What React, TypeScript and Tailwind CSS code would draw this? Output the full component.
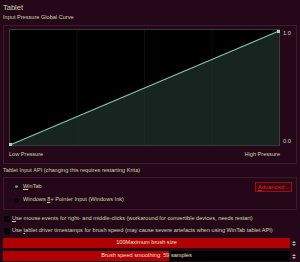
import React from 'react';

const FONT = { fontFamily: '"Liberation Sans", Arial, sans-serif' };

export default function App() {
    return (
        <div className="w-[300px] h-[262px] overflow-hidden bg-[#24081a] text-[#cfd3a6] text-[5.6px] leading-none" style={FONT}>
            {/* Title */}
            <p className="pl-[3px] pt-[4px] h-[14px] text-[7.5px]">Tablet</p>
            <p className="pl-[3px] h-[11px] pt-[1px]">Input Pressure Global Curve</p>

            {/* Curve group */}
            <div className="mx-[3px] h-[139px] border border-[#3d1a2c] pl-[5px] pt-[3px]">
                <div className="flex">
                    <CurveGraph />
                    <div className="flex flex-col justify-between pl-[3px] pt-[2px] pb-[1px]">
                        <span>1.0</span>
                        <span>0.0</span>
                    </div>
                </div>
                <div className="flex justify-between w-[271px] pt-[6px]">
                    <span>Low Pressure</span>
                    <span>High Pressure</span>
                </div>
            </div>

            <p className="pl-[3px] pt-[4px] h-[13px]">Tablet Input API (changing this requires restarting Krita)</p>

            {/* API group */}
            <div className="mx-[3px] h-[33px] border border-[#3d1a2c] pl-[10px] pr-[4px] pt-[3px]">
                <div className="flex items-center justify-between h-[11px]">
                    <Radio checked label={<><u>W</u>inTab</>} />
                    <button className="w-[37px] h-[10px] border border-[#a30a14] bg-[#3a0810] text-[#d8203c] text-[6px] leading-none">
                        <u>A</u>dvanced...
                    </button>
                </div>
                <div className="flex items-center h-[10px] mt-[3px]">
                    <Radio label={<>Windows <u>8</u>+ Pointer Input (Windows Ink)</>} />
                </div>
            </div>

            {/* Checkboxes */}
            <div className="pl-[4px] pt-[3px]">
                <Check label={<><u>U</u>se mouse events for right- and middle-clicks (workaround for convertible devices, needs restart)</>} />
                <Check label={<>Use <u>t</u>ablet driver timestamps for brush speed (may cause severe artefacts when using WinTab tablet API)</>} />
            </div>

            {/* Sliders */}
            <div className="flex flex-col gap-[3px] pl-[3px] pt-[1px]">
                <SpinBar value={100} text="100Maximum brush size" />
                <SpinBar value={58} text={<>Brush speed smoothing: <span className="bg-[#b00000]">59</span> samples</>} />
            </div>
        </div>
    );
}

function CurveGraph() {
    return (
        <svg width="271" height="117" className="block shrink-0">
            <rect x="0.5" y="0.5" width="270" height="116" fill="#000000" stroke="#3a3a36" />
            <line x1="68" y1="1" x2="68" y2="116" stroke="#1f0712" />
            <line x1="135.5" y1="1" x2="135.5" y2="116" stroke="#1f0712" />
            <line x1="203" y1="1" x2="203" y2="116" stroke="#1f0712" />
            <polygon points="1,116 270,2 270,116" fill="#17241f" />
            <line x1="68" y1="88" x2="68" y2="116" stroke="#1c2a24" />
            <line x1="135.5" y1="59" x2="135.5" y2="116" stroke="#1c2a24" />
            <line x1="203" y1="31" x2="203" y2="116" stroke="#1c2a24" />
            <line x1="1" y1="116" x2="270" y2="2" stroke="#7fc6b6" strokeWidth="1.2" />
            <rect x="0" y="114" width="3" height="3" fill="#9fd8c8" />
            <rect x="268" y="1" width="3" height="3" fill="#9fd8c8" />
        </svg>
    );
}

function Radio({ label, checked }: { label: React.ReactNode; checked?: boolean }) {
    return (
        <div className="flex items-center gap-[4px]">
            <span className="w-[5px] h-[5px] rounded-full bg-[#050505] flex items-center justify-center">
                {checked && <span className="w-[3px] h-[3px] rounded-full bg-[#6f8f80]" />}
            </span>
            <span>{label}</span>
        </div>
    );
}

function Check({ label }: { label: React.ReactNode }) {
    return (
        <div className="flex items-center gap-[2px] h-[12px]">
            <span className="w-[6px] h-[6px] bg-[#050505] shrink-0" />
            <span>{label}</span>
        </div>
    );
}

function SpinBar({ value, text }: { value: number; text: React.ReactNode }) {
    return (
        <div className="flex items-center h-[10px]">
            <div className="relative w-[287px] h-[10px] bg-[#020202]">
                <div className="h-full bg-[#b00000]" style={{ width: `${value}%` }} />
                <div className="absolute inset-0 flex items-center justify-center text-[#f0e0d0]">
                    <span>{text}</span>
                </div>
            </div>
            <div className="w-[8px] flex flex-col items-center gap-[1px]">
                <span className="w-0 h-0 border-x-[2px] border-x-transparent border-b-[2px] border-b-[#bfb8a0]" />
                <span className="w-0 h-0 border-x-[2px] border-x-transparent border-t-[2px] border-t-[#bfb8a0]" />
            </div>
        </div>
    );
}
